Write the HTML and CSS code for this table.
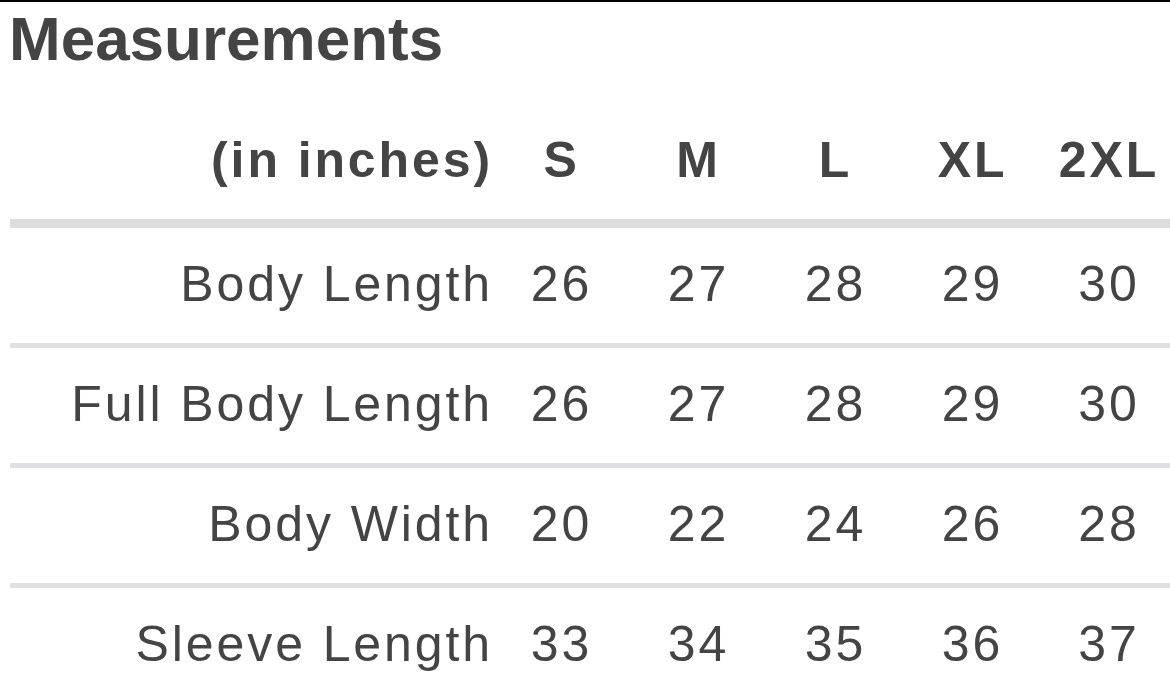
FILE: index.html
```html
<!DOCTYPE html>
<html lang="en">
<head>
<meta charset="utf-8">
<title>Measurements</title>
<link rel="stylesheet" href="styles.css">
</head>
<body>
<div class="page">
  <h1 class="title">Measurements</h1>
  <div class="chart">
    <div class="row head">
      <div class="label">(in inches)</div>
      <div class="cell">S</div>
      <div class="cell">M</div>
      <div class="cell">L</div>
      <div class="cell">XL</div>
      <div class="cell">2XL</div>
    </div>
    <div class="row">
      <div class="label">Body Length</div>
      <div class="cell">26</div>
      <div class="cell">27</div>
      <div class="cell">28</div>
      <div class="cell">29</div>
      <div class="cell">30</div>
    </div>
    <div class="row">
      <div class="label">Full Body Length</div>
      <div class="cell">26</div>
      <div class="cell">27</div>
      <div class="cell">28</div>
      <div class="cell">29</div>
      <div class="cell">30</div>
    </div>
    <div class="row">
      <div class="label">Body Width</div>
      <div class="cell">20</div>
      <div class="cell">22</div>
      <div class="cell">24</div>
      <div class="cell">26</div>
      <div class="cell">28</div>
    </div>
    <div class="row last">
      <div class="label">Sleeve Length</div>
      <div class="cell">33</div>
      <div class="cell">34</div>
      <div class="cell">35</div>
      <div class="cell">36</div>
      <div class="cell">37</div>
    </div>
  </div>
</div>
</body>
</html>
```

FILE: styles.css
```css
html, body {
  margin: 0;
  padding: 0;
  background: #ffffff;
}

body {
  font-family: "Liberation Sans", Arial, sans-serif;
  color: #444444;
  width: 1170px;
  height: 699px;
  overflow: hidden;
}

.page {
  border-top: 2px solid #000000;
  height: 697px;
}

.title {
  margin: 6px 0 0 9px;
  font-size: 62px;
  line-height: 62px;
  font-weight: bold;
  color: #444444;
}

.chart {
  margin-left: 10px;
  width: 1167px;
}

.row {
  display: grid;
  grid-template-columns: 483px repeat(4, 137px) 1fr;
  font-size: 50px;
  line-height: 50px;
  letter-spacing: 2.9px;
  padding: 31px 0 34px;
  border-bottom: 5px solid #e0e0e6;
}

.row.head {
  font-weight: bold;
  padding: 65px 0 34px;
  border-bottom: 9px solid #dddddd;
}

.row.last {
  border-bottom: none;
  padding-bottom: 30px;
}

.label {
  text-align: right;
}

.cell {
  text-align: center;
}
```
